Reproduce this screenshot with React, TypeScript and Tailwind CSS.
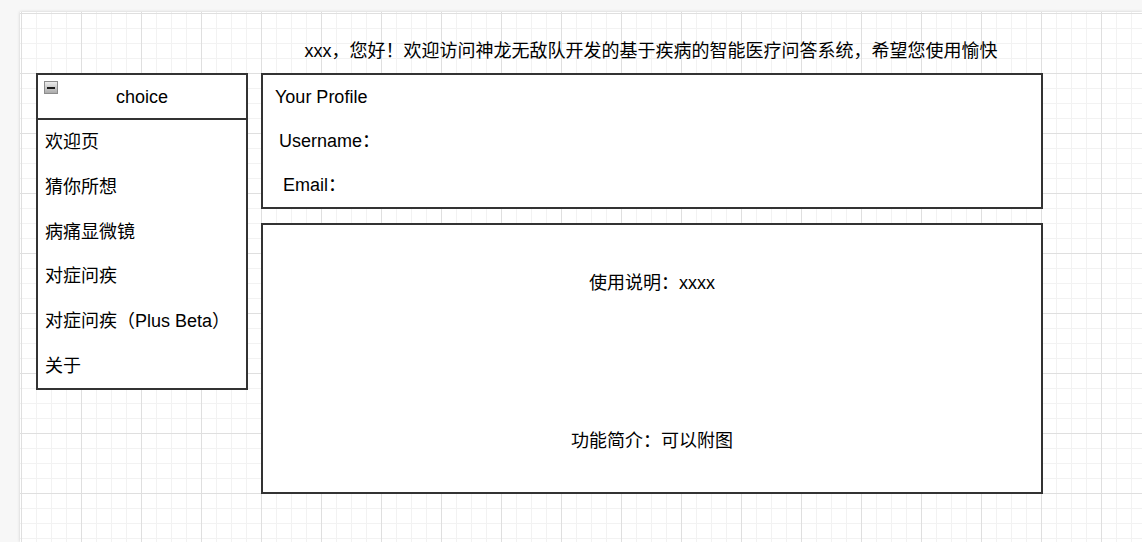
export default function App() {
  const menu = ['欢迎页', '猜你所想', '病痛显微镜', '对症问疾', '对症问疾（Plus Beta）', '关于'];

  return (
    <div className="h-screen w-full overflow-hidden bg-[#f7f7f7] pl-[20px] pt-[12px] text-[18px] leading-[22px] text-black font-['Liberation_Sans','Noto_Sans_CJK_SC',sans-serif]">
      <div className="h-full w-full bg-white shadow-[0_0_3px_rgba(0,0,0,0.18)] bg-[image:linear-gradient(to_right,#dfdfdf_1px,transparent_1px),linear-gradient(to_bottom,#dfdfdf_1px,transparent_1px),linear-gradient(to_right,#f2f2f2_1px,transparent_1px),linear-gradient(to_bottom,#f2f2f2_1px,transparent_1px)] bg-[size:60px_60px,60px_60px,15px_15px,15px_15px] bg-[position:1px_1px]">
        <div className="pl-[16px]">
          <div className="ml-[224px] w-[782px] pt-[28px] pb-[11px] text-center whitespace-nowrap">
            xxx，您好！欢迎访问神龙无敌队开发的基于疾病的智能医疗问答系统，希望您使用愉快
          </div>

          <div className="flex gap-[13px]">
            {/* sidebar */}
            <div className="flex h-[317px] w-[212px] flex-col border-2 border-[#333] bg-white">
              <div className="relative flex h-[45px] shrink-0 items-center justify-center border-b-2 border-[#333]">
                <div className="absolute left-[6px] top-[6px] flex h-[13px] w-[14px] items-center justify-center border border-[#8c8c8c] bg-gradient-to-b from-[#ececec] to-[#ababab]">
                  <div className="h-[2px] w-[8px] bg-[#1a1a1a]" />
                </div>
                <span>choice</span>
              </div>
              {menu.map((m) => (
                <div key={m} className="flex flex-1 items-center pl-[7px] whitespace-nowrap">
                  {m}
                </div>
              ))}
            </div>

            {/* right column */}
            <div className="flex w-[782px] flex-col gap-[14px]">
              <div className="flex h-[136px] flex-col border-2 border-[#333] bg-white">
                <div className="flex flex-1 items-center pl-[12px]">Your Profile</div>
                <div className="flex flex-1 items-center pl-[16px]">Username：</div>
                <div className="flex flex-1 items-center pl-[20px]">Email：</div>
              </div>
              <div className="flex h-[271px] flex-col items-center border-2 border-[#333] bg-white pt-[47px]">
                <div>使用说明：xxxx</div>
                <div className="mt-[136px]">功能简介：可以附图</div>
              </div>
            </div>
          </div>
        </div>
      </div>
    </div>
  );
}
